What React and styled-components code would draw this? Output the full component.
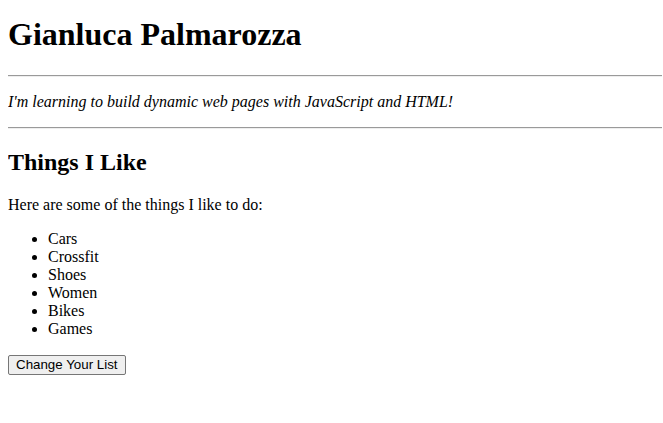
import * as React from "react"
import styled, { createGlobalStyle } from "styled-components"

const things = ["Cars", "Crossfit", "Shoes", "Women", "Bikes", "Games"]

const GlobalStyle = createGlobalStyle`
body {
  margin: 8px 1px 8px 8px;
  background: #fff;
  color: #000;
  font-family: "Liberation Serif", "Times New Roman", serif;
  font-size: 16px;
}
`

const Title = styled.h1`
font-size: 32px;
font-weight: bold;
margin: 8.4px 0 21.44px;
`

const Rule = styled.hr`
margin: 8px 0;
border: none;
border-top: 1px solid #9a9a9a;
border-bottom: 1px solid #eee;
`

const Tagline = styled.p`
font-style: italic;
margin: 16px 0;
`

const SubTitle = styled.h2`
font-size: 24px;
font-weight: bold;
margin: 19.92px 0;
`

const Text = styled.p`
margin: 16px 0;
`

const List = styled.ul`
margin: 16px 0 17px;
padding-left: 40px;
list-style: disc;
`

const ChangeButton = styled.button`
font-family: "Liberation Sans", Arial, sans-serif;
font-size: 13.33px;
padding: 1px 7px;
height: 20px;
background: #efefef;
color: #000;
border: 1px solid #767676;
border-radius: 2px;
`

const App = () => {
  return(
    <>
      <GlobalStyle />
      <Title>Gianluca Palmarozza</Title>
      <Rule />
      <Tagline>I'm learning to build dynamic web pages with JavaScript and HTML!</Tagline>
      <Rule />
      <SubTitle>Things I Like</SubTitle>
      <Text>Here are some of the things I like to do:</Text>
      <List>
        {things.map((item, index)=>(
          <li key={index}>{item}</li>
        ))}
      </List>
      <ChangeButton>Change Your List</ChangeButton>
    </>
  )
}

export default App
